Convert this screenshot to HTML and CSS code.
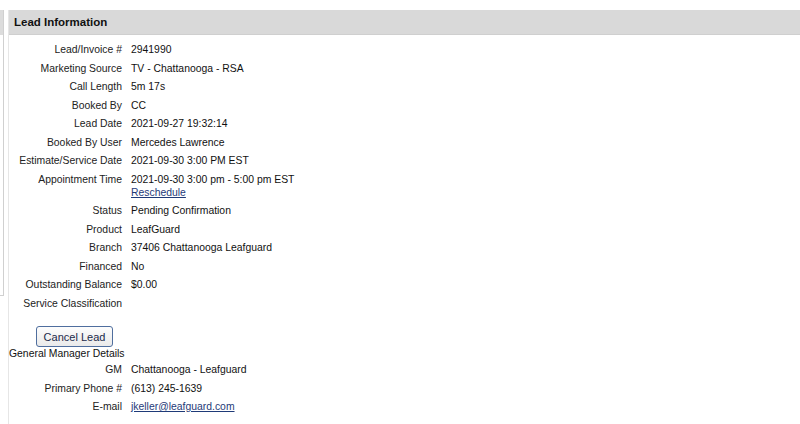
FILE: index.html
```html
<!DOCTYPE html>
<html>
<head>
<meta charset="utf-8">
<link rel="stylesheet" href="styles.css">
</head>
<body>
<div class="page">
  <div class="side">
    <div class="side-head"></div>
  </div>
  <div class="panel">
    <div class="panel-head">Lead Information</div>
    <div class="panel-body">
      <table class="info">
        <tr><td class="lbl">Lead/Invoice #</td><td class="val">2941990</td></tr>
        <tr><td class="lbl">Marketing Source</td><td class="val">TV - Chattanooga - RSA</td></tr>
        <tr><td class="lbl">Call Length</td><td class="val">5m 17s</td></tr>
        <tr><td class="lbl">Booked By</td><td class="val">CC</td></tr>
        <tr><td class="lbl">Lead Date</td><td class="val">2021-09-27 19:32:14</td></tr>
        <tr><td class="lbl">Booked By User</td><td class="val">Mercedes Lawrence</td></tr>
        <tr><td class="lbl">Estimate/Service Date</td><td class="val">2021-09-30 3:00 PM EST</td></tr>
        <tr><td class="lbl">Appointment Time</td><td class="val">2021-09-30 3:00 pm - 5:00 pm EST<br><a class="link" href="#">Reschedule</a></td></tr>
        <tr><td class="lbl">Status</td><td class="val">Pending Confirmation</td></tr>
        <tr><td class="lbl">Product</td><td class="val">LeafGuard</td></tr>
        <tr><td class="lbl">Branch</td><td class="val">37406 Chattanooga Leafguard</td></tr>
        <tr><td class="lbl">Financed</td><td class="val">No</td></tr>
        <tr><td class="lbl">Outstanding Balance</td><td class="val">$0.00</td></tr>
        <tr><td class="lbl">Service Classification</td><td class="val"></td></tr>
      </table>
      <div class="actions"><button class="btn">Cancel Lead</button></div>
      <div class="section-title">General Manager Details</div>
      <table class="info gm">
        <tr><td class="lbl">GM</td><td class="val">Chattanooga - Leafguard</td></tr>
        <tr><td class="lbl">Primary Phone #</td><td class="val">(613) 245-1639</td></tr>
        <tr><td class="lbl">E-mail</td><td class="val"><a class="link" href="#">jkeller@leafguard.com</a></td></tr>
      </table>
    </div>
  </div>
</div>
</body>
</html>
```
FILE: styles.css
```css
html, body {
  margin: 0;
  padding: 0;
  background: #fff;
}
body {
  font-family: "Liberation Sans", Arial, sans-serif;
  font-size: 10.4px;
  color: #111;
}
.page {
  display: flex;
  padding-top: 10px;
  height: 414px;
  overflow: hidden;
}
.side {
  width: 3px;
  height: 285px;
  border-right: 1px solid #d0d0d0;
  border-bottom: 1px solid #d0d0d0;
  flex: none;
}
.side-head {
  height: 25px;
  background: #dcdcdc;
}
.panel {
  margin-left: 4px;
  flex: 1;
  border-left: 1px solid #e6e6e6;
}
.panel-head {
  height: 24px;
  line-height: 24px;
  background: #d9d9d9;
  border-bottom: 1px solid #cfcfcf;
  font-weight: bold;
  font-size: 11.5px;
  padding-left: 5px;
  color: #111;
}
.panel-body {
  padding-top: 8px;
}
.info {
  border-collapse: collapse;
}
.info td {
  padding: 0 0 5.5px 0;
  vertical-align: top;
  line-height: 13px;
}
.info .lbl {
  width: 113px;
  text-align: right;
  color: #222;
  white-space: nowrap;
}
.info .val {
  padding-left: 9px;
  white-space: nowrap;
}
.link {
  color: #1f3a78;
  text-decoration: underline;
}
.actions {
  padding: 11px 0 0 27px;
  height: 21px;
}
.btn {
  font-family: "Liberation Sans", Arial, sans-serif;
  font-size: 11px;
  color: #1b2a4a;
  background: linear-gradient(#fdfdfd, #eaeaea);
  border: 1px solid #4f6e9e;
  border-radius: 3px;
  height: 21px;
  width: 77px;
  padding: 0;
}
.section-title {
  line-height: 13px;
  color: #111;
}
.gm {
  margin-top: 3px;
}
```
